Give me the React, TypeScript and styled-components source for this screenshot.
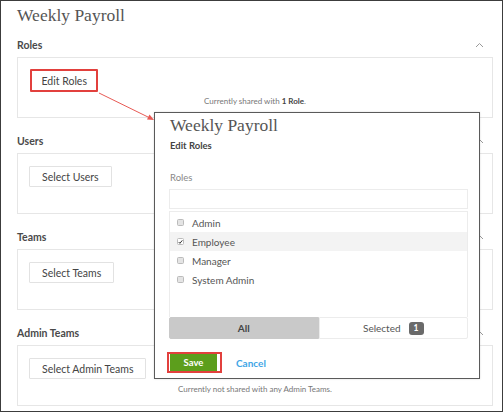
import React from "react";
import styled, { createGlobalStyle } from "styled-components";

const Global = createGlobalStyle`
  html, body { margin: 0; padding: 0; background: #fff; }
  * { box-sizing: border-box; }
  body { font-family: Lato, "Open Sans", sans-serif; }
`;

const Page = styled.div`
  position: relative;
  width: 503px;
  height: 412px;
  border: 1px solid #3c3c3c;
  padding: 0 9px 0 16px;
  overflow: hidden;
  background: #fff;
`;

const Title = styled.h1`
  margin: 0;
  height: 31px;
  padding-top: 3px;
  font-family: "Liberation Serif", serif;
  font-weight: normal;
  font-size: 17.5px;
  line-height: 22px;
  color: #555;
`;

const Section = styled.section`
  margin-bottom: 10px;
`;

const SectionHeader = styled.div`
  height: 25px;
  display: flex;
  align-items: center;
  justify-content: space-between;
  padding-right: 9px;
`;

const SectionLabel = styled.span`
  font-size: 10.5px;
  font-weight: 700;
  color: #4a4a4a;
`;

const Panel = styled.div`
  height: 61px;
  border: 1px solid #e6e6e6;
  padding: 11px 11px 0;
  display: flex;
  flex-direction: column;
  align-items: flex-start;
`;

const PanelButton = styled.button<{ $highlight?: boolean }>`
  height: ${(p) => (p.$highlight ? 23 : 21)}px;
  margin-top: ${(p) => (p.$highlight ? 0 : 1)}px;
  margin-left: ${(p) => (p.$highlight ? 1 : 0)}px;
  padding: 0 ${(p) => (p.$highlight ? 9.5 : 12)}px;
  background: #fff;
  border: ${(p) => (p.$highlight ? "2px solid #e2403d" : "1px solid #e2e2e2")};
  border-radius: 1px;
  font-family: Lato, sans-serif;
  font-size: 10.5px;
  color: #444;
  cursor: pointer;
`;

const Status = styled.div<{ $top: number }>`
  align-self: stretch;
  margin-top: ${(p) => p.$top}px;
  text-align: center;
  font-size: 8px;
  line-height: 10px;
  color: #777;
  b { color: #444; font-weight: 700; }
`;

const Chevron = () => (
  <svg width="9" height="6" viewBox="0 0 9 6">
    <polyline points="1,5 4.5,1.5 8,5" fill="none" stroke="#999" strokeWidth="1" />
  </svg>
);

const Modal = styled.div`
  position: absolute;
  left: 153px;
  top: 111px;
  width: 326px;
  height: 267px;
  border: 1px solid #5a5a5a;
  background: #fff;
  padding: 0 11px 0 14px;
  display: flex;
  flex-direction: column;
  box-shadow: 0 0 2px rgba(0, 0, 0, 0.15);
`;

const ModalTitle = styled.div`
  margin-top: 1px;
  margin-left: 1px;
  font-family: "Liberation Serif", serif;
  font-size: 17.5px;
  line-height: 22px;
  color: #555;
`;

const ModalSub = styled.div`
  margin-top: 4px;
  margin-left: 1px;
  font-size: 9.5px;
  font-weight: 700;
  color: #444;
  line-height: 12px;
`;

const FieldLabel = styled.div`
  margin-top: 20px;
  margin-left: 1px;
  font-size: 9.5px;
  line-height: 12px;
  color: #888;
`;

const Input = styled.div`
  margin-top: 5px;
  height: 20px;
  border: 1px solid #ececec;
`;

const List = styled.div`
  margin-top: 2px;
  height: 106px;
  border: 1px solid #ececec;
  border-bottom: none;
  padding-top: 1px;
  display: flex;
  flex-direction: column;
`;

const Item = styled.div<{ $active?: boolean }>`
  height: 19px;
  display: flex;
  align-items: center;
  gap: 8px;
  padding-left: 7px;
  background: ${(p) => (p.$active ? "#f3f3f3" : "transparent")};
  font-size: 10px;
  color: #555;
`;

const Box = styled.span<{ $checked?: boolean }>`
  width: 7px;
  height: 7px;
  border-radius: 1.5px;
  border: 1px solid #bbb;
  background: ${(p) => (p.$checked ? "#fff" : "#e4e4e4")};
  display: inline-flex;
  align-items: center;
  justify-content: center;
`;

const Tabs = styled.div`
  height: 22px;
  display: grid;
  grid-template-columns: 1fr 1fr;
`;

const Tab = styled.div<{ $active?: boolean }>`
  display: flex;
  align-items: center;
  justify-content: center;
  gap: 8px;
  font-size: 10px;
  font-weight: ${(p) => (p.$active ? 700 : 400)};
  color: ${(p) => (p.$active ? "#444" : "#555")};
  background: ${(p) => (p.$active ? "#c9c9c9" : "#fff")};
  border: 1px solid ${(p) => (p.$active ? "#c9c9c9" : "#ececec")};
  border-radius: ${(p) => (p.$active ? "2px 0 0 2px" : "0 2px 2px 0")};
`;

const Badge = styled.span`
  min-width: 15px;
  height: 13px;
  padding: 0 4px;
  border-radius: 3px;
  background: #6a6a6a;
  color: #fff;
  font-size: 8.5px;
  font-weight: 700;
  display: inline-flex;
  align-items: center;
  justify-content: center;
`;

const Actions = styled.div`
  margin-top: 13px;
  margin-left: -2px;
  display: flex;
  align-items: center;
  gap: 14px;
`;

const SaveOutline = styled.div`
  border: 2px solid #e2403d;
  padding: 0 3px 0 1px;
  height: 21px;
  display: flex;
  align-items: center;
`;

const SaveButton = styled.button`
  width: 47px;
  height: 17px;
  border: none;
  background: #5c9e1c;
  color: #fff;
  font-family: Lato, sans-serif;
  font-size: 9.5px;
  font-weight: 700;
  padding: 0;
`;

const CancelLink = styled.a`
  font-size: 10px;
  font-weight: 700;
  color: #3fa6e6;
  text-decoration: none;
`;

const Arrow = styled.svg`
  position: absolute;
  left: 0;
  top: 0;
  pointer-events: none;
`;

const sections = [
  { label: "Roles", button: "Edit Roles", highlight: true, status: <>Currently shared with <b>1 Role</b>.</> },
  { label: "Users", button: "Select Users" },
  { label: "Teams", button: "Select Teams" },
  { label: "Admin Teams", button: "Select Admin Teams", status: <>Currently not shared with any Admin Teams.</> },
];

const roles = [
  { name: "Admin" },
  { name: "Employee", checked: true },
  { name: "Manager" },
  { name: "System Admin" },
];

export default function App() {
  return (
    <>
      <Global />
      <Page>
        <Title>Weekly Payroll</Title>
        {sections.map((s) => (
          <Section key={s.label}>
            <SectionHeader>
              <SectionLabel>{s.label}</SectionLabel>
              <Chevron />
            </SectionHeader>
            <Panel>
              <PanelButton $highlight={s.highlight}>{s.button}</PanelButton>
              {s.status && <Status $top={s.highlight ? 4 : 5}>{s.status}</Status>}
            </Panel>
          </Section>
        ))}

        <Arrow width="503" height="412" viewBox="0 0 503 412">
          <line x1="98" y1="92" x2="148" y2="116.5" stroke="#e85a55" strokeWidth="1" />
          <polygon points="153,119 146,118.5 148.5,113.5" fill="#e85a55" />
        </Arrow>

        <Modal>
          <ModalTitle>Weekly Payroll</ModalTitle>
          <ModalSub>Edit Roles</ModalSub>
          <FieldLabel>Roles</FieldLabel>
          <Input />
          <List>
            {roles.map((r) => (
              <Item key={r.name} $active={r.checked}>
                <Box $checked={r.checked}>
                  {r.checked && (
                    <svg width="6" height="6" viewBox="0 0 6 6">
                      <polyline points="0.8,3 2.3,4.6 5.2,1" fill="none" stroke="#333" strokeWidth="1.2" />
                    </svg>
                  )}
                </Box>
                {r.name}
              </Item>
            ))}
          </List>
          <Tabs>
            <Tab $active>All</Tab>
            <Tab>
              Selected <Badge>1</Badge>
            </Tab>
          </Tabs>
          <Actions>
            <SaveOutline>
              <SaveButton>Save</SaveButton>
            </SaveOutline>
            <CancelLink href="#">Cancel</CancelLink>
          </Actions>
        </Modal>
      </Page>
    </>
  );
}
